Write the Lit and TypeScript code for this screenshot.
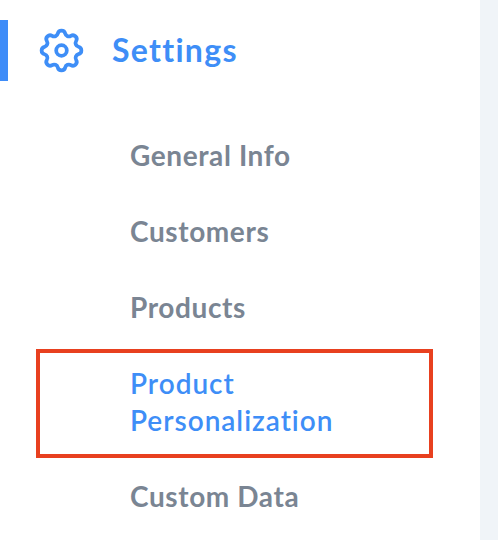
import { LitElement, html, css } from "lit";
import { customElement } from "lit/decorators.js";

@customElement("app-root")
export class AppRoot extends LitElement {
  static styles = css`
    :host { display: block; width: 498px; height: 540px; overflow: hidden; background: #f0f4f8; font-family: "Lato", "Noto Sans", sans-serif; }
    .side { width: 480px; height: 540px; background: #fff; box-sizing: border-box; padding-top: 20px; }
    .head { height: 61px; display: flex; align-items: center; gap: 24px; color: #3e8ef7; border-left: 8px solid #3e8cf8; padding-left: 27px; }
    .head svg { width: 53px; height: 53px; flex: none; }
    .title { font-size: 32px; font-weight: 700; letter-spacing: 1.3px; position: relative; top: -1px; }
    .nav { list-style: none; margin: 0; padding: 0; margin-top: 56px; }
    .item { padding: 0 0 39px 130px; font-size: 28px; line-height: 37px; font-weight: 700; color: #7a8593; width: 240px; letter-spacing: 0.6px; position: relative; }
    .item.on { color: #3e8ef7; font-weight: 600; letter-spacing: 0.98px; }
    .mark { position: absolute; left: 36px; top: -16px; width: 397px; height: 109px; box-sizing: border-box; border: 4px solid #e8401f; }
  `;
  render() {
    return html`<div class="side">
      <div class="head">
        <svg viewBox="0 0 24 24" fill="none" stroke="currentColor" stroke-width="1.7" stroke-linecap="round" stroke-linejoin="round">
          <path d="M10.325 4.317c.426-1.756 2.924-1.756 3.35 0a1.724 1.724 0 002.573 1.066c1.543-.94 3.31.826 2.37 2.37a1.724 1.724 0 001.065 2.572c1.756.426 1.756 2.924 0 3.35a1.724 1.724 0 00-1.066 2.573c.94 1.543-.826 3.31-2.37 2.37a1.724 1.724 0 00-2.572 1.065c-.426 1.756-2.924 1.756-3.35 0a1.724 1.724 0 00-2.573-1.066c-1.543.94-3.31-.826-2.37-2.37a1.724 1.724 0 00-1.065-2.572c-1.756-.426-1.756-2.924 0-3.35a1.724 1.724 0 001.066-2.573c-.94-1.543.826-3.31 2.37-2.37.996.608 2.296.07 2.572-1.065z"/>
          <circle cx="12" cy="12" r="2.4"/>
        </svg>
        <span class="title">Settings</span>
      </div>
      <ul class="nav">
        <li class="item">General Info</li>
        <li class="item">Customers</li>
        <li class="item">Products</li>
        <li class="item on">Product<br />Personalization<span class="mark"></span></li>
        <li class="item">Custom Data</li>
      </ul>
    </div>`;
  }
}
